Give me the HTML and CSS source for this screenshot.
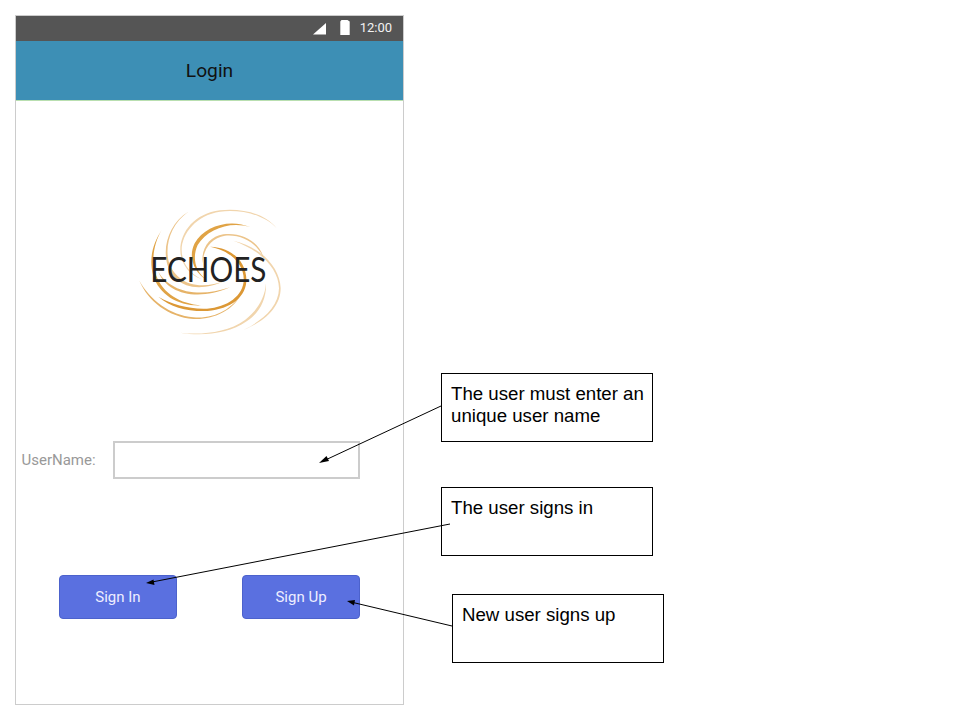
FILE: index.html
```html
<!DOCTYPE html>
<html lang="en">
<head>
<meta charset="utf-8">
<title>Login</title>
<link rel="stylesheet" href="styles.css">
</head>
<body>
<div class="canvas">
  <div class="phone">
    <div class="status">
      <svg class="sig" width="14" height="12" viewBox="0 0 14 12"><path d="M0 11.5 L13 0 V11.5 Z" fill="#fff"/></svg>
      <svg class="bat" width="10" height="15" viewBox="0 0 10 15"><path d="M1.5 0 H7.5 L9.7 1.5 V15 H.3 V1.5 Z" fill="#fff"/></svg>
      <span class="time">12:00</span>
    </div>
    <div class="appbar">Login</div>
    <div class="content">
      <svg class="logo" width="180" height="140" viewBox="0 0 540 420">
        <g class="swirl">
          <path class="c5" d="M310 122 C390 140 450 200 452 265 C452 320 405 365 340 390 C398 362 446 320 447 265 C446 205 390 150 310 122Z"/>
          <path class="c5" d="M150 398 C210 405 290 400 345 360 C385 330 405 290 408 250 C410 295 390 338 350 364 C295 404 210 408 150 398Z"/>
          <path class="c5" d="M440 85 C400 42 330 28 270 35 C200 45 155 100 155 150 C155 190 180 220 215 238 C178 225 151 190 151 150 C151 95 195 40 270 31 C335 24 405 40 440 85Z"/>
          <path class="c4" d="M175 35 C125 70 105 130 115 180 C130 240 195 280 290 240 C190 288 120 250 109 180 C100 125 125 65 175 35Z"/>
          <path class="c4" d="M402 178 C385 130 335 102 285 107 C245 113 220 145 218 190 C212 145 240 108 280 103 C335 96 390 125 402 178Z"/>
          <path class="c3" d="M28 242 C60 300 120 345 190 352 C250 358 305 330 335 280 C310 332 250 360 190 357 C115 350 55 305 28 242Z"/>
          <path class="c3" d="M85 215 C115 268 195 298 300 262 C200 305 110 280 85 215Z"/>
          <path class="c2" d="M95 90 C72 130 62 180 78 225 C98 280 150 312 215 316 C150 320 88 288 69 225 C55 170 72 125 95 90Z"/>
          <path class="c2" d="M362 82 C300 62 232 88 203 135 C185 175 197 215 230 240 C190 215 174 170 194 130 C222 78 300 54 362 82Z"/>
          <path class="c1" d="M240 140 C310 142 352 190 349 245 C345 298 290 332 220 333 C165 333 120 320 85 290 C125 313 170 325 220 326 C280 326 335 295 341 245 C345 197 305 152 240 140Z"/>
        </g>
        <text class="logo-text" x="61" y="245" textLength="348" lengthAdjust="spacingAndGlyphs">ECHOES</text>
      </svg>
      <div class="field-row">
        <span class="field-label">UserName:</span>
        <div class="field-input"></div>
      </div>
      <div class="actions">
        <div class="btn">Sign In</div>
        <div class="btn">Sign Up</div>
      </div>
    </div>
  </div>
  <div class="note note-a">The user must enter an unique user name</div>
  <div class="note note-b">The user signs in</div>
  <div class="note note-c">New user signs up</div>
  <svg class="arrows" width="960" height="720" viewBox="0 0 960 720">
    <path class="ar" d="M441 406 L325 460.2"/><path class="ah" d="M319 463 L326.5 456 L329 461 Z"/>
    <path class="ar" d="M450 524 L152 582"/><path class="ah" d="M146 583 L153.5 579.5 L154.5 585 Z"/>
    <path class="ar" d="M452 626 L353 602.5"/><path class="ah" d="M347 601 L355 600 L354 605.5 Z"/>
  </svg>
</div>
</body>
</html>
```

FILE: styles.css
```css
html, body { margin: 0; padding: 0; background: #fff; }
.canvas { position: relative; width: 960px; height: 720px; padding: 15px; box-sizing: border-box; overflow: hidden; }
.phone { width: 389px; height: 690px; box-sizing: border-box; border: 1px solid #ccc; display: flex; flex-direction: column; font-family: Roboto, sans-serif; }
.status { height: 25px; background: #555; display: flex; align-items: center; justify-content: flex-end; padding-right: 11px; padding-bottom: 2px; box-sizing: border-box; color: #f2f2f2; font-size: 13px; flex: none; }
.sig { margin-right: 13px; margin-top: 3px; }
.bat { margin-right: 10px; }
.appbar { flex: none; background: #3d8fb5; border-bottom: 1px solid #b9dfb0; padding-bottom: 1px; box-sizing: border-box; height: 60px; display: flex; align-items: center; justify-content: center; font-size: 19.2px; color: #111; }
.content { display: flex; flex-direction: column; flex: 1; }
.logo { display: block; margin: 99px 0 0 114px; flex: none; }
.swirl { filter: blur(.5px); }
.swirl .c1 { fill: #dc9835; }
.swirl .c2 { fill: #e0a345; }
.swirl .c3 { fill: #e6b368; }
.swirl .c4 { fill: #ecc48a; }
.swirl .c5 { fill: #f1d5ad; }
.logo-text { font-family: Lato, sans-serif; font-weight: 400; font-size: 106px; fill: #222; }
.field-row { display: flex; align-items: center; margin-top: 101px; padding-left: 5.5px; flex: none; }
.field-label { width: 91.5px; font-size: 15px; color: #999; }
.field-input { width: 247px; height: 38px; box-sizing: border-box; border: 2px solid #ccc; background: #fff; }
.actions { display: flex; gap: 65px; margin-top: 96px; padding-left: 43px; flex: none; }
.btn { width: 118px; height: 44px; box-sizing: border-box; border: 1px solid #4c62cc; border-radius: 4px; background: #5a70e0; color: #eef; font-size: 15px; display: flex; align-items: center; justify-content: center; }
.note { position: absolute; width: 212px; height: 69px; box-sizing: border-box; border: 1px solid #000; background: #fff; padding: 9px 8px 0 9px; font-family: "Liberation Sans", Arial, sans-serif; font-size: 18.67px; line-height: 22px; color: #000; }
.note-a { left: 441px; top: 373px; }
.note-b { left: 441px; top: 487px; }
.note-c { left: 452px; top: 594px; }
.arrows { position: absolute; left: 0; top: 0; pointer-events: none; }
.ar { fill: none; stroke: #000; stroke-width: 1; }
.ah { fill: #000; }
```
